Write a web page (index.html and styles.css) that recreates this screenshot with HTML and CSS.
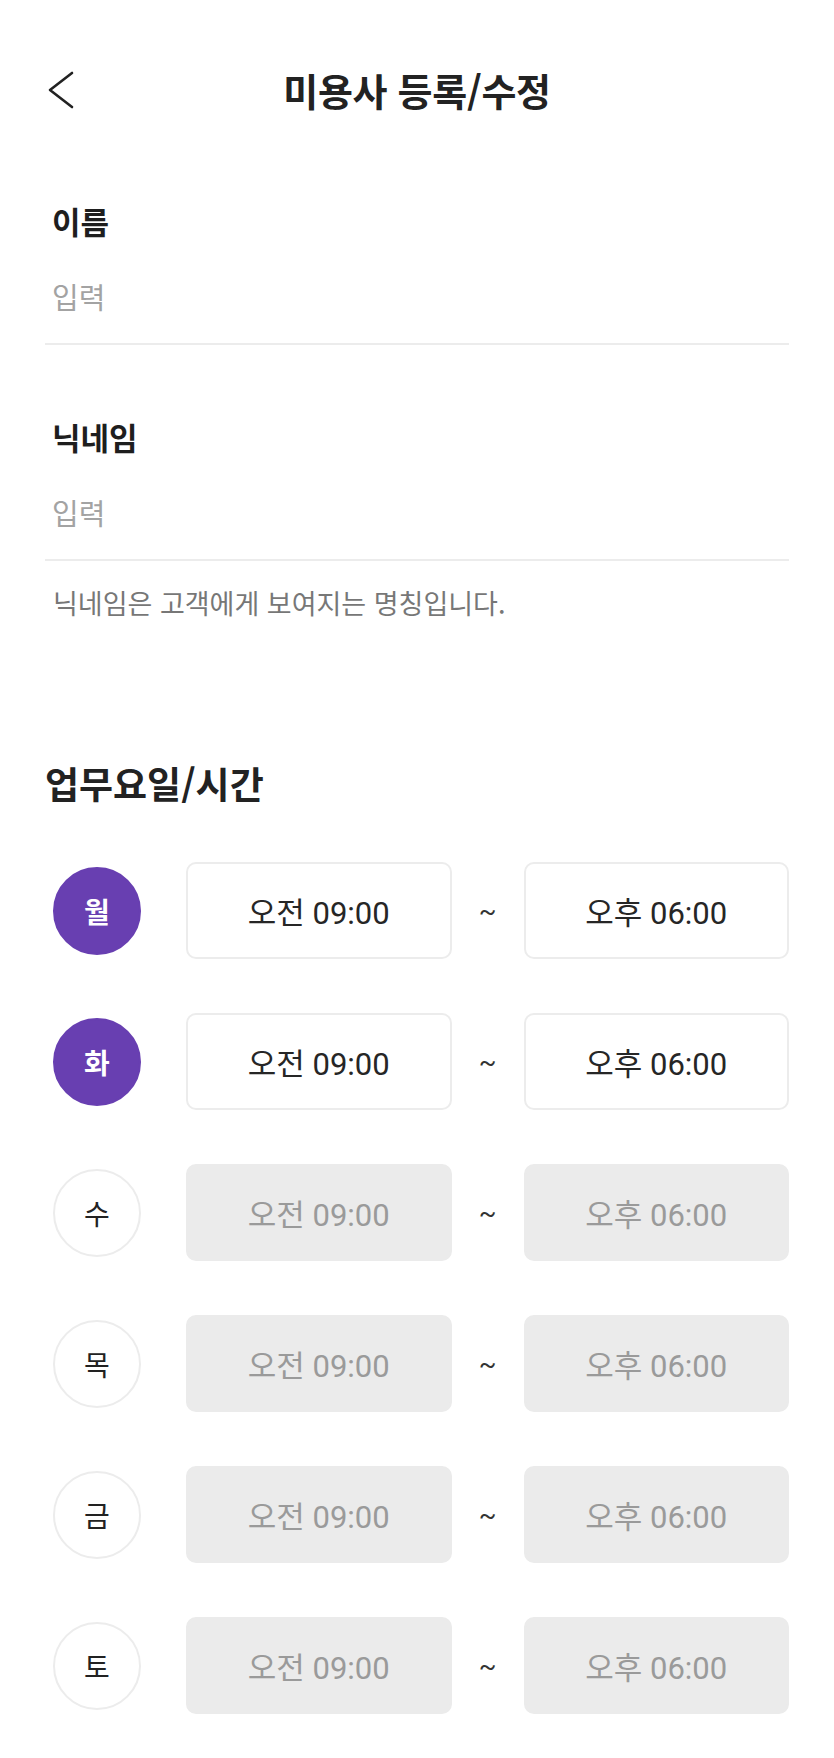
FILE: index.html
```html
<!DOCTYPE html>
<html lang="ko">
<head>
<meta charset="utf-8">
<title>미용사 등록/수정</title>
<link rel="stylesheet" href="styles.css">
</head>
<body>
<div class="page">
  <header class="header">
    <div class="back">
      <svg width="26" height="38" viewBox="0 0 26 38"><polyline points="24,2 2,19 24,36" fill="none" stroke="#222" stroke-width="2.6" stroke-linecap="round" stroke-linejoin="round"/></svg>
    </div>
    <h1 class="title">미용사 등록/수정</h1>
    <div></div>
  </header>

  <section class="form">
    <div class="field first">
      <div class="label">이름</div>
      <div class="input">입력</div>
    </div>
    <div class="field">
      <div class="label">닉네임</div>
      <div class="input">입력</div>
    </div>
    <p class="helper">닉네임은 고객에게 보여지는 명칭입니다.</p>

    <h2 class="section-title">업무요일/시간</h2>

    <div class="schedule">
      <div class="row">
        <div class="day on">월</div>
        <div class="time">오전 09:00</div>
        <div class="sep">~</div>
        <div class="time">오후 06:00</div>
      </div>
      <div class="row">
        <div class="day on">화</div>
        <div class="time">오전 09:00</div>
        <div class="sep">~</div>
        <div class="time">오후 06:00</div>
      </div>
      <div class="row">
        <div class="day">수</div>
        <div class="time off">오전 09:00</div>
        <div class="sep">~</div>
        <div class="time off">오후 06:00</div>
      </div>
      <div class="row">
        <div class="day">목</div>
        <div class="time off">오전 09:00</div>
        <div class="sep">~</div>
        <div class="time off">오후 06:00</div>
      </div>
      <div class="row">
        <div class="day">금</div>
        <div class="time off">오전 09:00</div>
        <div class="sep">~</div>
        <div class="time off">오후 06:00</div>
      </div>
      <div class="row">
        <div class="day">토</div>
        <div class="time off">오전 09:00</div>
        <div class="sep">~</div>
        <div class="time off">오후 06:00</div>
      </div>
    </div>
  </section>
</div>
</body>
</html>
```

FILE: styles.css
```css
* { box-sizing: border-box; }
html, body { margin: 0; padding: 0; background: #fff; }
body {
  font-family: "Noto Sans CJK KR", "Noto Sans", sans-serif;
  color: #222;
}
.page { width: 834px; }

.header {
  height: 180px;
  display: grid;
  grid-template-columns: 1fr auto 1fr;
  align-items: center;
}
.back { padding-left: 48px; display: flex; align-items: center; }
.back svg { display: block; }
.title {
  margin: 0;
  font-size: 38px;
  font-weight: 700;
  line-height: 50px;
  color: #222;
  letter-spacing: -0.3px;
}

.form { padding: 0 45px; }
.field { border-bottom: 2px solid #ececec; padding-bottom: 27px; padding-top: 72px; }
.field.first { padding-top: 21px; }
.label {
  font-size: 31px;
  font-weight: 700;
  line-height: 40px;
  padding-left: 7px;
  color: #1e1e1e;
}
.input {
  margin-top: 35px;
  font-size: 29px;
  line-height: 40px;
  padding-left: 7px;
  color: #a3a3a3;
}
.helper {
  margin: 24px 0 0;
  font-size: 27px;
  line-height: 36px;
  padding-left: 8px;
  color: #777;
}

.section-title {
  margin: 138px 0 0;
  font-size: 37px;
  font-weight: 700;
  line-height: 48px;
  color: #222;
}

.schedule {
  margin-top: 55px;
  padding-left: 8px;
  display: flex;
  flex-direction: column;
  gap: 54px;
}
.row {
  display: flex;
  align-items: center;
  height: 97px;
}
.day {
  width: 88px;
  height: 88px;
  border-radius: 50%;
  border: 2px solid #ececec;
  display: flex;
  align-items: center;
  justify-content: center;
  font-size: 28px;
  color: #222;
  margin-right: 45px;
  flex: none;
}
.day.on {
  background: #683fb1;
  border-color: #683fb1;
  color: #fff;
  font-weight: 700;
}
.time {
  flex: 1;
  height: 97px;
  border: 2px solid #ececec;
  border-radius: 10px;
  display: flex;
  align-items: center;
  justify-content: center;
  font-family: "Roboto", "Noto Sans CJK KR", sans-serif;
  font-size: 31px;
  color: #262626;
}
.time.off {
  background: #ebebeb;
  border-color: #ebebeb;
  color: #9a9a9a;
}
.sep {
  width: 72px;
  flex: none;
  text-align: center;
  font-family: "Roboto", sans-serif;
  font-size: 26px;
  color: #333;
}
```
